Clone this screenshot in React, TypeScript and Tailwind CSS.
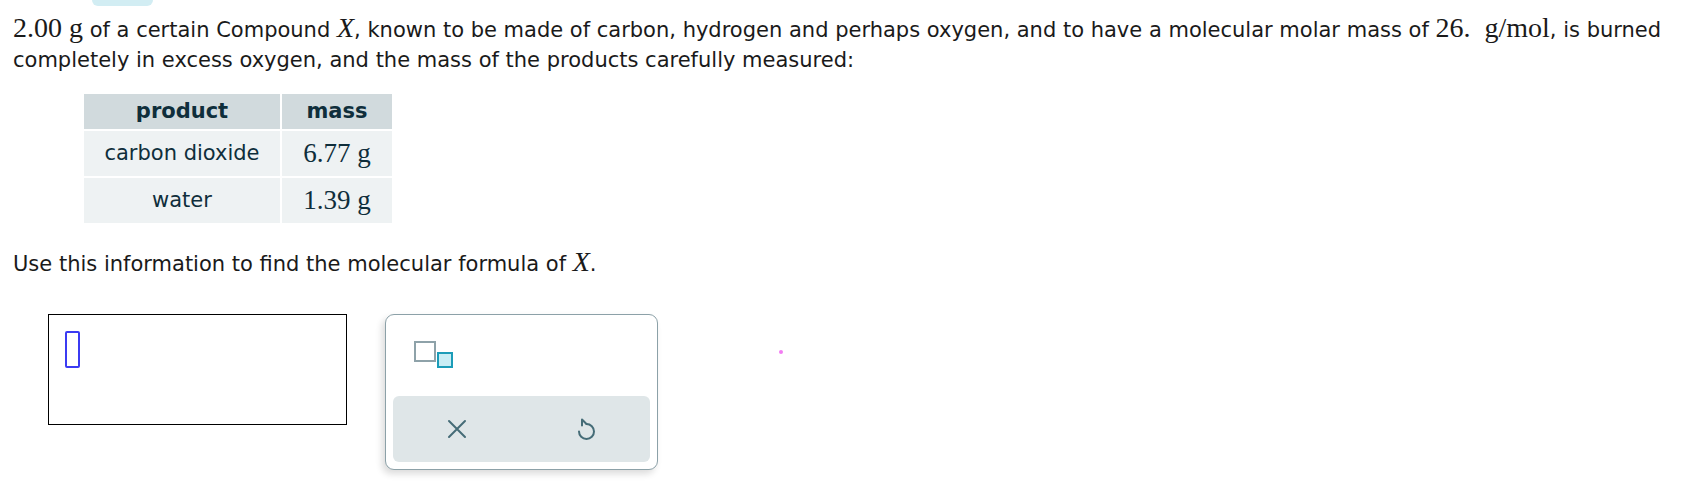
import React from "react";

const serif = "font-['Liberation_Serif',serif]";

function UndoIcon() {
  return (
    <svg width="24" height="26" viewBox="0 0 24 26" fill="none" stroke="#456c77" strokeWidth="2" strokeLinecap="round" strokeLinejoin="round">
      <path d="M12.5 8 A7.5 7.5 0 1 1 5 15.5" />
      <path d="M8 9.5 V3.5 L12.5 8" />
    </svg>
  );
}

function XIcon() {
  return (
    <svg width="20" height="20" viewBox="0 0 20 20" fill="none" stroke="#456c77" strokeWidth="2" strokeLinecap="round">
      <path d="M2 2 L18 18 M18 2 L2 18" />
    </svg>
  );
}

function SupSubIcon() {
  return (
    <svg width="40" height="28" viewBox="0 0 40 28">
      <rect x="1" y="1" width="20" height="19" fill="#fff" stroke="#8ea2a9" strokeWidth="2" />
      <rect x="24" y="12" width="14" height="14" fill="#c8edf5" stroke="#1b9cb8" strokeWidth="2" />
    </svg>
  );
}

export default function App() {
  return (
    <div className="relative w-[1699px] h-[487px] bg-white font-['DejaVu_Sans',sans-serif] text-[#1a1a1a]">
      <div className="ml-[92px] w-[61px] h-[6px] rounded-b-[8px] bg-[#d2edf3]" />
      <p className="mt-[7px] pl-[13px] text-[21px] leading-[30px] whitespace-nowrap">
        <span className={`${serif} text-[28px]`}>2.00&nbsp;g</span> of a certain Compound{" "}
        <span className={`${serif} italic text-[28px]`}>X</span>, known to be made of carbon, hydrogen and perhaps oxygen, and to have a molecular molar mass of{" "}
        <span className={`${serif} text-[28px]`}>26.{"\u2002"}g/mol</span>, is burned
        <br />
        completely in excess oxygen, and the mass of the products carefully measured:
      </p>

      <div className="mt-[19px] ml-[84px] grid grid-cols-[196px_110px] gap-[2px] w-[308px] text-[21px] text-[#0f2e3b] bg-white">
        <div className="h-[35px] bg-[#d1dadd] flex items-center justify-center font-bold">product</div>
        <div className="h-[35px] bg-[#d1dadd] flex items-center justify-center font-bold">mass</div>
        <div className="h-[45px] bg-[#eef2f3] flex items-center justify-center">carbon dioxide</div>
        <div className={`h-[45px] bg-[#eef2f3] flex items-center justify-center ${serif} text-[27px]`}>6.77&nbsp;g</div>
        <div className="h-[45px] bg-[#eef2f3] flex items-center justify-center">water</div>
        <div className={`h-[45px] bg-[#eef2f3] flex items-center justify-center ${serif} text-[27px]`}>1.39&nbsp;g</div>
      </div>

      <p className="mt-[24px] pl-[13px] text-[21px] leading-[30px]">
        Use this information to find the molecular formula of{" "}
        <span className={`${serif} italic text-[28px]`}>X</span>.
      </p>

      <div className="mt-[35px] ml-[48px] flex items-start gap-[38px]">
        <div className="w-[299px] h-[111px] border border-black pl-[16px] pt-[16px]">
          <div className="w-[15px] h-[37px] border-2 border-[#3b3bf2] rounded-[2px]" />
        </div>
        <div className="w-[273px] h-[156px] border border-[#8ca1a8] rounded-[9px] bg-white shadow-[-3px_4px_7px_rgba(0,0,0,0.14)] flex flex-col">
          <div className="h-[81px] pl-[28px] pt-[26px]">
            <SupSubIcon />
          </div>
          <div className="mx-[7px] mb-[7px] h-[66px] rounded-[6px] bg-[#dfe6e8] grid grid-cols-2">
            <div className="flex items-center justify-center">
              <XIcon />
            </div>
            <div className="flex items-center justify-center">
              <UndoIcon />
            </div>
          </div>
        </div>
      </div>

      <div className="absolute left-[779px] top-[350px] w-[4px] h-[4px] rounded-full bg-[#f27cf2]" />
    </div>
  );
}
